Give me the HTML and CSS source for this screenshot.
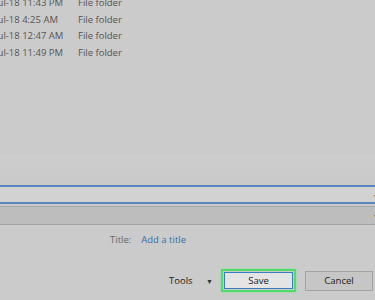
FILE: index.html
```html
<!DOCTYPE html>
<html lang="en">
<head>
    <meta charset="UTF-8">
    <title>Save As</title>
    <link rel="stylesheet" href="styles.css">
</head>
<body>
    <div class="dialog">
        <div class="file-list">
            <div class="row"><span class="date">Jul-18 11:43 PM</span><span class="type">File folder</span></div>
            <div class="row"><span class="date">Jul-18 4:25 AM</span><span class="type">File folder</span></div>
            <div class="row"><span class="date">Jul-18 12:47 AM</span><span class="type">File folder</span></div>
            <div class="row"><span class="date">Jul-18 11:49 PM</span><span class="type">File folder</span></div>
        </div>
        <div class="fields">
            <div class="field name-field"><span class="drop">&#9662;</span></div>
            <div class="field type-field"><span class="drop">&#9662;</span></div>
        </div>
        <div class="meta">
            <span class="meta-label">Title:</span>
            <span class="meta-value">Add a title</span>
        </div>
        <div class="actions">
            <span class="tools">Tools <span class="caret">&#9660;</span></span>
            <div class="save-ring"><button class="btn save">Save</button></div>
            <button class="btn cancel">Cancel</button>
        </div>
    </div>
</body>
</html>
```

FILE: styles.css
```css
* {
    margin: 0;
    padding: 0;
    box-sizing: border-box;
}

body {
    width: 375px;
    height: 300px;
    overflow: hidden;
    background: #cbcbcb;
    font-family: "Open Sans", "Noto Sans", sans-serif;
    font-size: 9.5px;
    color: #4a4a4a;
}

.dialog {
    display: flex;
    flex-direction: column;
    height: 300px;
}

.file-list {
    margin-top: -6px;
    margin-left: -5px;
    height: 160px;
}

.row {
    display: flex;
    height: 16.7px;
    align-items: center;
}

.date {
    width: 83px;
    color: #555;
}

.type {
    color: #555;
}

.fields {
    background: linear-gradient(#cdcdcd, #c6c6c6);
    padding-top: 31px;
}

.field {
    position: relative;
    height: 19px;
}

.name-field {
    background: #d2d2d2;
    border-top: 2px solid #5a86bd;
    border-bottom: 2px solid #5a86bd;
}

.type-field {
    margin-top: 2px;
    background: #bdbdbd;
    border-top: 1px solid #a9a9a9;
    border-bottom: 1px solid #a4a4a4;
}

.drop {
    position: absolute;
    right: -3px;
    top: 3px;
    font-size: 8px;
    color: #555;
}

.meta {
    display: flex;
    gap: 10px;
    padding-left: 110px;
    margin-top: 6px;
    height: 16px;
    align-items: center;
}

.meta-label {
    color: #666;
}

.meta-value {
    color: #3a6ba8;
}

.actions {
    display: flex;
    align-items: center;
    margin-top: 22px;
    padding-left: 169px;
}

.tools {
    color: #222;
    width: 52px;
}

.caret {
    font-size: 7px;
    margin-left: 11px;
    color: #333;
}

.save-ring {
    border: 2px solid #4fdc6a;
    box-shadow: 0 0 2px #7be88f;
    padding: 1px;
}

.btn {
    font-family: "Open Sans", "Noto Sans", sans-serif;
    font-size: 9.5px;
    color: #222;
    height: 17px;
}

.save {
    width: 69px;
    background: #e4e4e4;
    border: 1px solid #3e7cc2;
}

.cancel {
    margin-left: 9px;
    width: 68px;
    height: 20px;
    background: #c6c6c6;
    border: 1px solid #a3a3a3;
}
```
